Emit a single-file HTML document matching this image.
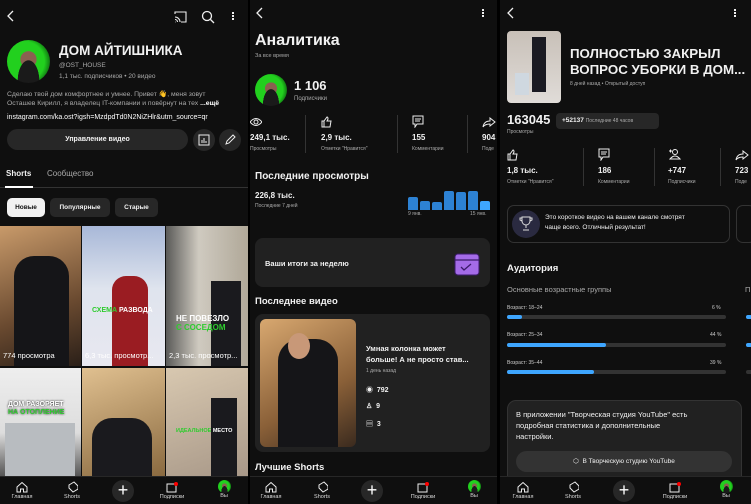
<!DOCTYPE html><html><head><meta charset="utf-8"><style>
*{margin:0;padding:0;box-sizing:border-box}
body{width:751px;height:504px;background:#000;font-family:"Liberation Sans","Noto Sans CJK SC",sans-serif;color:#f1f1f1;overflow:hidden;position:relative}
.p{position:absolute;top:0;height:504px;background:#0f0f0f;overflow:hidden}
.a{position:absolute;white-space:nowrap}
.g{color:#aaa}
.b{font-weight:bold}
.nav{position:absolute;left:0;right:0;top:476px;height:28px;background:#0f0f0f;border-top:1px solid #272727}
.ni{position:absolute;top:0;width:50px;margin-left:-25px;text-align:center;font-size:5.5px;color:#ddd}
.ni svg{display:block;margin:4px auto 1px}
.plus{position:absolute;top:3px;width:22px;height:22px;margin-left:-11px;border-radius:50%;background:#272727;text-align:center;line-height:21px;font-size:18px;color:#fff}
.av{border-radius:50%;background:radial-gradient(ellipse at 50% 95%,#1a1a1a 0 35%,transparent 36%),radial-gradient(circle at 50% 45%,#8a6050 0 25%,transparent 26%),radial-gradient(circle at 40% 50%,#22d01e 0 60%,#0e6a10 80%,#1a1a1a 95%)}
.div{position:absolute;width:1px;background:#333}
.thumb{position:absolute;overflow:hidden}
.bar{position:absolute;height:4px;border-radius:2px;background:#333}
.bar i{display:block;height:4px;border-radius:2px;background:#3ea6ff}
</style></head><body>

<!-- PANEL 1 -->
<div class="p" style="left:0;width:248px">
<svg class="a" style="left:6px;top:10px" width="10" height="12"><path d="M7 1L2 6l5 5" stroke="#eee" stroke-width="1.3" fill="none"/></svg>
<svg class="a" style="left:174px;top:11px" width="14" height="12"><path d="M1 3V1h11v10H7M1 6a5 5 0 015 5M1 8.5a2.5 2.5 0 012.5 2.5M1 11h.5" stroke="#eee" stroke-width="1.1" fill="none"/></svg>
<svg class="a" style="left:201px;top:10px" width="14" height="14"><circle cx="6" cy="6" r="4.5" stroke="#eee" stroke-width="1.3" fill="none"/><path d="M9.5 9.5L13 13" stroke="#eee" stroke-width="1.3"/></svg>
<div class="a" style="left:232px;top:12px;width:2px;height:2px;background:#eee;box-shadow:0 3px #eee,0 6px #eee"></div>
<div class="a av" style="left:7px;top:40px;width:43px;height:43px"></div>
<div class="a b" style="left:59px;top:43px;font-size:13.5px">ДОМ АЙТИШНИКА</div>
<div class="a g" style="left:59px;top:62px;font-size:6.5px">@OST_HOUSE</div>
<div class="a g" style="left:59px;top:73px;font-size:6.5px">1,1 тыс. подписчиков • 20 видео</div>
<div class="a g" style="left:7px;top:90px;font-size:6.8px">Сделаю твой дом комфортнее и умнее. Привет 👋, меня зовут</div>
<div class="a g" style="left:7px;top:100px;font-size:6.8px">Осташев Кирилл, я владелец IT-компании и повёрнут на тех <b style="color:#fff">...ещё</b></div>
<div class="a" style="left:7px;top:114px;font-size:7px;color:#fff">instagram.com/ka.ost?igsh=MzdpdTd0N2NiZHlr&amp;utm_source=qr</div>
<div class="a b" style="left:7px;top:129px;width:181px;height:21px;border-radius:11px;background:#272727;font-size:7px;text-align:center;line-height:21px">Управление видео</div>
<div class="a" style="left:193px;top:129px;width:22px;height:22px;border-radius:50%;background:#272727"></div>
<svg class="a" style="left:198px;top:134px" width="12" height="12"><rect x="1" y="1" width="10" height="10" stroke="#eee" fill="none"/><path d="M4 9V6M6 9V4M8 9V7" stroke="#eee"/></svg>
<div class="a" style="left:219px;top:129px;width:22px;height:22px;border-radius:50%;background:#272727"></div>
<svg class="a" style="left:224px;top:134px" width="12" height="12"><path d="M2 10l1-3 6-6 2 2-6 6z" stroke="#eee" fill="none"/></svg>
<div class="a b" style="left:6px;top:169px;font-size:8px">Shorts</div>
<div class="a g" style="left:47px;top:169px;font-size:8px">Сообщество</div>
<div class="a" style="left:0;top:187px;width:248px;height:1px;background:#333"></div>
<div class="a" style="left:5px;top:186px;width:28px;height:2px;background:#fff"></div>
<div class="a b" style="left:7px;top:198px;width:38px;height:19px;border-radius:5px;background:#f1f1f1;color:#0f0f0f;font-size:6.5px;text-align:center;line-height:19px">Новые</div>
<div class="a b" style="left:50px;top:198px;width:60px;height:19px;border-radius:5px;background:#272727;font-size:6.5px;text-align:center;line-height:19px">Популярные</div>
<div class="a b" style="left:115px;top:198px;width:43px;height:19px;border-radius:5px;background:#272727;font-size:6.5px;text-align:center;line-height:19px">Старые</div>
<div class="thumb" style="left:0;top:226px;width:81px;height:140px;background:linear-gradient(160deg,#c89a6a,#6a4a30 60%,#2a1f18)"><div class="a" style="left:14px;top:30px;width:55px;height:110px;background:#151518;border-radius:20px 20px 0 0"></div><div class="a" style="left:3px;top:125px;font-size:7.5px;color:#fff">774 просмотра</div></div>
<div class="thumb" style="left:82px;top:226px;width:83px;height:140px;background:linear-gradient(180deg,#a8b8d8,#dfe4ee 45%,#e8e8f0)"><div class="a" style="left:30px;top:50px;width:36px;height:90px;background:#9a1c22;border-radius:14px 14px 0 0"></div><div class="a b" style="left:10px;top:81px;font-size:7px;color:#fff"><span style="color:#2ecc2e">СХЕМА</span> РАЗВОДА</div><div class="a" style="left:3px;top:125px;font-size:7.5px;color:#fff">6,3 тыс. просмотр...</div></div>
<div class="thumb" style="left:166px;top:226px;width:82px;height:140px;background:linear-gradient(90deg,#5a5a58,#cfcac0 40%,#b0a898)"><div class="a" style="left:45px;top:55px;width:30px;height:85px;background:#1a1a1e"></div><div class="a b" style="left:10px;top:88px;font-size:8px;color:#fff;line-height:9px">НЕ ПОВЕЗЛО<br><span style="color:#2ecc2e">С СОСЕДОМ</span></div><div class="a" style="left:3px;top:125px;font-size:7.5px;color:#fff">2,3 тыс. просмотр...</div></div>
<div class="thumb" style="left:0;top:368px;width:81px;height:108px;background:linear-gradient(180deg,#eee,#ddd 60%,#555)"><div class="a" style="left:5px;top:55px;width:70px;height:53px;background:#b8bcc0"></div><div class="a b" style="left:8px;top:33px;font-size:7px;color:#fff;line-height:8px;text-shadow:0 0 2px #000">ДОМ РАЗОРЯЕТ<br><span style="color:#2ecc2e">НА ОТОПЛЕНИЕ</span></div></div>
<div class="thumb" style="left:82px;top:368px;width:83px;height:108px;background:linear-gradient(160deg,#e0c090,#8a6a40)"><div class="a" style="left:10px;top:50px;width:60px;height:58px;background:#1a1a1e;border-radius:20px 20px 0 0"></div></div>
<div class="thumb" style="left:166px;top:368px;width:82px;height:108px;background:linear-gradient(160deg,#d8c8b0,#a89888)"><div class="a" style="left:45px;top:30px;width:26px;height:78px;background:#1a1a1e"></div><div class="a b" style="left:10px;top:60px;font-size:5.5px;color:#2ecc2e">ИДЕАЛЬНОЕ <span style="color:#fff">МЕСТО</span></div></div>
<div class="nav">
<div class="ni" style="left:22px"><svg width="12" height="12"><path d="M1 6L6 1.5 11 6v5H7.5V8h-3v3H1z" stroke="#eee" fill="none"/></svg>Главная</div>
<div class="ni" style="left:72px"><svg width="12" height="12"><path d="M8 1L3 4v3l4 4 5-3V5z" stroke="#eee" fill="none"/></svg>Shorts</div>
<div class="plus" style="left:123px">+</div>
<div class="ni" style="left:172px"><svg width="12" height="12"><rect x="1" y="3" width="9" height="8" stroke="#eee" fill="none"/><circle cx="10" cy="3" r="2" fill="#f00"/></svg>Подписки</div>
<div class="ni" style="left:224px"><div class="av" style="width:13px;height:13px;margin:3px auto 0"></div>Вы</div>
</div>
</div>

<!-- PANEL 2 -->
<div class="p" style="left:250px;width:247px">
<svg class="a" style="left:5px;top:7px" width="10" height="12"><path d="M7 1L2 6l5 5" stroke="#eee" stroke-width="1.3" fill="none"/></svg>
<div class="a" style="left:232px;top:9px;width:2px;height:2px;background:#eee;box-shadow:0 3px #eee,0 6px #eee"></div>
<div class="a b" style="left:5px;top:32px;font-size:16px">Аналитика</div>
<div class="a g" style="left:5px;top:53px;font-size:5.5px">За все время</div>
<div class="a av" style="left:5px;top:74px;width:32px;height:32px"></div>
<div class="a b" style="left:44px;top:78px;font-size:13px">1 106</div>
<div class="a g" style="left:44px;top:96px;font-size:6px">Подписчики</div>
<svg class="a" style="left:0;top:117px" width="12" height="10"><path d="M0 5q6-7 12 0q-6 7-12 0z" stroke="#eee" fill="none"/><circle cx="6" cy="5" r="2" stroke="#eee" fill="none"/></svg>
<div class="a b" style="left:0;top:133px;font-size:8px">249,1 тыс.</div><div class="a g" style="left:0;top:146px;font-size:5px">Просмотры</div>
<div class="div" style="left:55px;top:115px;height:38px"></div>
<svg class="a" style="left:71px;top:116px" width="12" height="12"><path d="M1 5h2v6H1zM3 5l3-4q1 0 1 2L6 5h4l-1 6H3" stroke="#eee" fill="none"/></svg>
<div class="a b" style="left:71px;top:133px;font-size:8px">2,9 тыс.</div><div class="a g" style="left:71px;top:146px;font-size:5px">Отметки "Нравится"</div>
<div class="div" style="left:147px;top:115px;height:38px"></div>
<svg class="a" style="left:162px;top:115px" width="12" height="13"><path d="M1 1h10v8H5l-2 3V9H1z" stroke="#eee" fill="none"/><path d="M3 4h6M3 6h5" stroke="#eee"/></svg>
<div class="a b" style="left:162px;top:133px;font-size:8px">155</div><div class="a g" style="left:162px;top:146px;font-size:5px">Комментарии</div>
<div class="div" style="left:217px;top:115px;height:38px"></div>
<svg class="a" style="left:232px;top:117px" width="14" height="11"><path d="M8 1l5 4-5 4V7Q3 7 1 10q1-6 7-6z" stroke="#eee" fill="none"/></svg>
<div class="a b" style="left:232px;top:133px;font-size:8px">904</div><div class="a g" style="left:232px;top:146px;font-size:5px">Поде</div>
<div class="a b" style="left:5px;top:171px;font-size:10px">Последние просмотры</div>
<div class="a b" style="left:5px;top:191px;font-size:8px">226,8 тыс.</div>
<div class="a g" style="left:5px;top:203px;font-size:5px">Последние 7 дней</div>
<div class="a" style="left:158px;top:197px;width:10px;height:13px;background:#2d82d4;border-radius:2px 2px 0 0"></div>
<div class="a" style="left:170px;top:201px;width:10px;height:9px;background:#2d82d4;border-radius:2px 2px 0 0"></div>
<div class="a" style="left:182px;top:202px;width:10px;height:8px;background:#2d82d4;border-radius:2px 2px 0 0"></div>
<div class="a" style="left:194px;top:191px;width:10px;height:19px;background:#2d82d4;border-radius:2px 2px 0 0"></div>
<div class="a" style="left:206px;top:192px;width:10px;height:18px;background:#2d82d4;border-radius:2px 2px 0 0"></div>
<div class="a" style="left:218px;top:191px;width:10px;height:19px;background:#2d82d4;border-radius:2px 2px 0 0"></div>
<div class="a" style="left:230px;top:201px;width:10px;height:9px;background:#3ea6ff;border-radius:2px 2px 0 0"></div>
<div class="a g" style="left:158px;top:211px;font-size:5px">9 янв.</div><div class="a g" style="left:220px;top:211px;font-size:5px">15 янв.</div>
<div class="a" style="left:5px;top:238px;width:235px;height:49px;border-radius:8px;background:#212121"></div>
<div class="a b" style="left:15px;top:259px;font-size:7.5px">Ваши итоги за неделю</div>
<svg class="a" style="left:202px;top:249px" width="30" height="30"><rect x="3" y="5" width="24" height="21" rx="3" fill="#a46be8" stroke="#3a1a6a"/><path d="M3 11h24M9 18l3 3 7-6" stroke="#3a1a6a" fill="none" stroke-width="1.3"/></svg>
<div class="a b" style="left:5px;top:296px;font-size:9.5px">Последнее видео</div>
<div class="a" style="left:5px;top:314px;width:235px;height:138px;border-radius:8px;background:#212121"></div>
<div class="thumb" style="left:10px;top:319px;width:96px;height:128px;border-radius:6px;background:linear-gradient(150deg,#d8a870,#8a6038 60%,#3a2a1e)"><div class="a" style="left:18px;top:20px;width:60px;height:108px;background:#151518;border-radius:22px 22px 0 0"></div><div class="a" style="left:28px;top:14px;width:22px;height:26px;border-radius:50%;background:#c89878"></div></div>
<div class="a b" style="left:116px;top:343px;font-size:7.5px;line-height:11px">Умная колонка может<br>больше! А не просто став...</div>
<div class="a g" style="left:116px;top:368px;font-size:5px">1 день назад</div>
<div class="a b" style="left:116px;top:385px;font-size:7px">◉ &nbsp;792</div>
<div class="a b" style="left:116px;top:402px;font-size:7px">♙ &nbsp;9</div>
<div class="a b" style="left:116px;top:419px;font-size:7px">▤ &nbsp;3</div>
<div class="a b" style="left:5px;top:462px;font-size:9.5px">Лучшие Shorts</div>
<div class="nav">
<div class="ni" style="left:21px"><svg width="12" height="12"><path d="M1 6L6 1.5 11 6v5H7.5V8h-3v3H1z" stroke="#eee" fill="none"/></svg>Главная</div>
<div class="ni" style="left:72px"><svg width="12" height="12"><path d="M8 1L3 4v3l4 4 5-3V5z" stroke="#eee" fill="none"/></svg>Shorts</div>
<div class="plus" style="left:122px">+</div>
<div class="ni" style="left:173px"><svg width="12" height="12"><rect x="1" y="3" width="9" height="8" stroke="#eee" fill="none"/><circle cx="10" cy="3" r="2" fill="#f00"/></svg>Подписки</div>
<div class="ni" style="left:224px"><div class="av" style="width:13px;height:13px;margin:3px auto 0"></div>Вы</div>
</div>
</div>

<!-- PANEL 3 -->
<div class="p" style="left:500px;width:251px">
<svg class="a" style="left:6px;top:7px" width="10" height="12"><path d="M7 1L2 6l5 5" stroke="#eee" stroke-width="1.3" fill="none"/></svg>
<div class="a" style="left:234px;top:9px;width:2px;height:2px;background:#eee;box-shadow:0 3px #eee,0 6px #eee"></div>
<div class="thumb" style="left:7px;top:31px;width:54px;height:72px;border-radius:4px;background:linear-gradient(180deg,#c8c0b8,#e0dcd8)"><div class="a" style="left:25px;top:6px;width:14px;height:55px;background:#1a1a22"></div><div class="a" style="left:8px;top:42px;width:14px;height:22px;background:#cfd8e0"></div></div>
<div class="a b" style="left:70px;top:46px;font-size:13.3px;line-height:16px">ПОЛНОСТЬЮ ЗАКРЫЛ<br>ВОПРОС УБОРКИ В ДОМ...</div>
<div class="a g" style="left:70px;top:81px;font-size:5px">8 дней назад • Открытый доступ</div>
<div class="a b" style="left:7px;top:112px;font-size:13px">163045</div>
<div class="a" style="left:56px;top:113px;width:103px;height:16px;border-radius:4px;background:#272727"></div>
<div class="a b" style="left:62px;top:117px;font-size:6.5px">+52137 <span class="g" style="font-weight:normal;font-size:5px">Последние 48 часов</span></div>
<div class="a g" style="left:7px;top:129px;font-size:5px">Просмотры</div>
<svg class="a" style="left:7px;top:149px" width="12" height="12"><path d="M1 5h2v6H1zM3 5l3-4q1 0 1 2L6 5h4l-1 6H3" stroke="#eee" fill="none"/></svg>
<div class="a b" style="left:7px;top:166px;font-size:8px">1,8 тыс.</div><div class="a g" style="left:7px;top:179px;font-size:5px">Отметки "Нравится"</div>
<div class="div" style="left:83px;top:148px;height:38px"></div>
<svg class="a" style="left:98px;top:148px" width="12" height="13"><path d="M1 1h10v8H5l-2 3V9H1z" stroke="#eee" fill="none"/><path d="M3 4h6M3 6h5" stroke="#eee"/></svg>
<div class="a b" style="left:98px;top:166px;font-size:8px">186</div><div class="a g" style="left:98px;top:179px;font-size:5px">Комментарии</div>
<div class="div" style="left:154px;top:148px;height:38px"></div>
<svg class="a" style="left:168px;top:148px" width="13" height="12"><circle cx="7" cy="4" r="2.5" stroke="#eee" fill="none"/><path d="M2 11q5-6 10 0z" stroke="#eee" fill="none"/><path d="M1 3h3M2.5 1.5v3" stroke="#eee"/></svg>
<div class="a b" style="left:168px;top:166px;font-size:8px">+747</div><div class="a g" style="left:168px;top:179px;font-size:5px">Подписчики</div>
<div class="div" style="left:220px;top:148px;height:38px"></div>
<svg class="a" style="left:235px;top:150px" width="14" height="11"><path d="M8 1l5 4-5 4V7Q3 7 1 10q1-6 7-6z" stroke="#eee" fill="none"/></svg>
<div class="a b" style="left:235px;top:166px;font-size:8px">723</div><div class="a g" style="left:235px;top:179px;font-size:5px">Поде</div>
<div class="a" style="left:7px;top:205px;width:223px;height:38px;border-radius:7px;border:1px solid #333"></div>
<div class="a" style="left:236px;top:205px;width:20px;height:38px;border-radius:7px;border:1px solid #333"></div>
<div class="a" style="left:12px;top:210px;width:28px;height:28px;border-radius:50%;background:#2a2a40"></div>
<svg class="a" style="left:19px;top:216px" width="14" height="15"><path d="M3 1h8v4a4 4 0 01-8 0zM3 2H1v2l2 1M11 2h2v2l-2 1M7 9v3M4 14h6" stroke="#ddd" fill="none"/></svg>
<div class="a" style="left:45px;top:213px;font-size:6.5px;line-height:10px">Это короткое видео на вашем канале смотрят<br>чаще всего. Отличный результат!</div>
<div class="a b" style="left:7px;top:263px;font-size:9.5px">Аудитория</div>
<div class="a g" style="left:7px;top:285px;font-size:7.5px">Основные возрастные группы</div>
<div class="a g" style="left:245px;top:285px;font-size:7.5px">П</div>
<div class="a" style="left:7px;top:305px;font-size:5px;color:#ccc">Возраст: 18–24</div><div class="a" style="left:212px;top:305px;font-size:5px;color:#ccc">6 %</div>
<div class="bar" style="left:7px;top:315px;width:219px"><i style="width:15px"></i></div>
<div class="a" style="left:7px;top:332px;font-size:5px;color:#ccc">Возраст: 25–34</div><div class="a" style="left:210px;top:332px;font-size:5px;color:#ccc">44 %</div>
<div class="bar" style="left:7px;top:343px;width:219px"><i style="width:99px"></i></div>
<div class="a" style="left:7px;top:360px;font-size:5px;color:#ccc">Возраст: 35–44</div><div class="a" style="left:210px;top:360px;font-size:5px;color:#ccc">39 %</div>
<div class="bar" style="left:7px;top:370px;width:219px"><i style="width:87px"></i></div>
<div class="bar" style="left:246px;top:315px;width:10px"><i style="width:6px"></i></div>
<div class="bar" style="left:246px;top:343px;width:10px"><i style="width:6px"></i></div>
<div class="bar" style="left:246px;top:370px;width:10px"></div>
<div class="a" style="left:7px;top:400px;width:235px;height:90px;border-radius:9px;background:#212121;border:1px solid #333"></div>
<div class="a" style="left:16px;top:409px;font-size:7.5px;line-height:11px">В приложении "Творческая студия YouTube" есть<br>подробная статистика и дополнительные<br>настройки.</div>
<div class="a" style="left:16px;top:451px;width:216px;height:21px;border-radius:11px;background:#333;font-size:6.5px;text-align:center;line-height:21px">⬡ &nbsp;В Творческую студию YouTube</div>
<div class="nav">
<div class="ni" style="left:23px"><svg width="12" height="12"><path d="M1 6L6 1.5 11 6v5H7.5V8h-3v3H1z" stroke="#eee" fill="none"/></svg>Главная</div>
<div class="ni" style="left:73px"><svg width="12" height="12"><path d="M8 1L3 4v3l4 4 5-3V5z" stroke="#eee" fill="none"/></svg>Shorts</div>
<div class="plus" style="left:124px">+</div>
<div class="ni" style="left:175px"><svg width="12" height="12"><rect x="1" y="3" width="9" height="8" stroke="#eee" fill="none"/><circle cx="10" cy="3" r="2" fill="#f00"/></svg>Подписки</div>
<div class="ni" style="left:226px"><div class="av" style="width:13px;height:13px;margin:3px auto 0"></div>Вы</div>
</div>
</div>
</body></html>
